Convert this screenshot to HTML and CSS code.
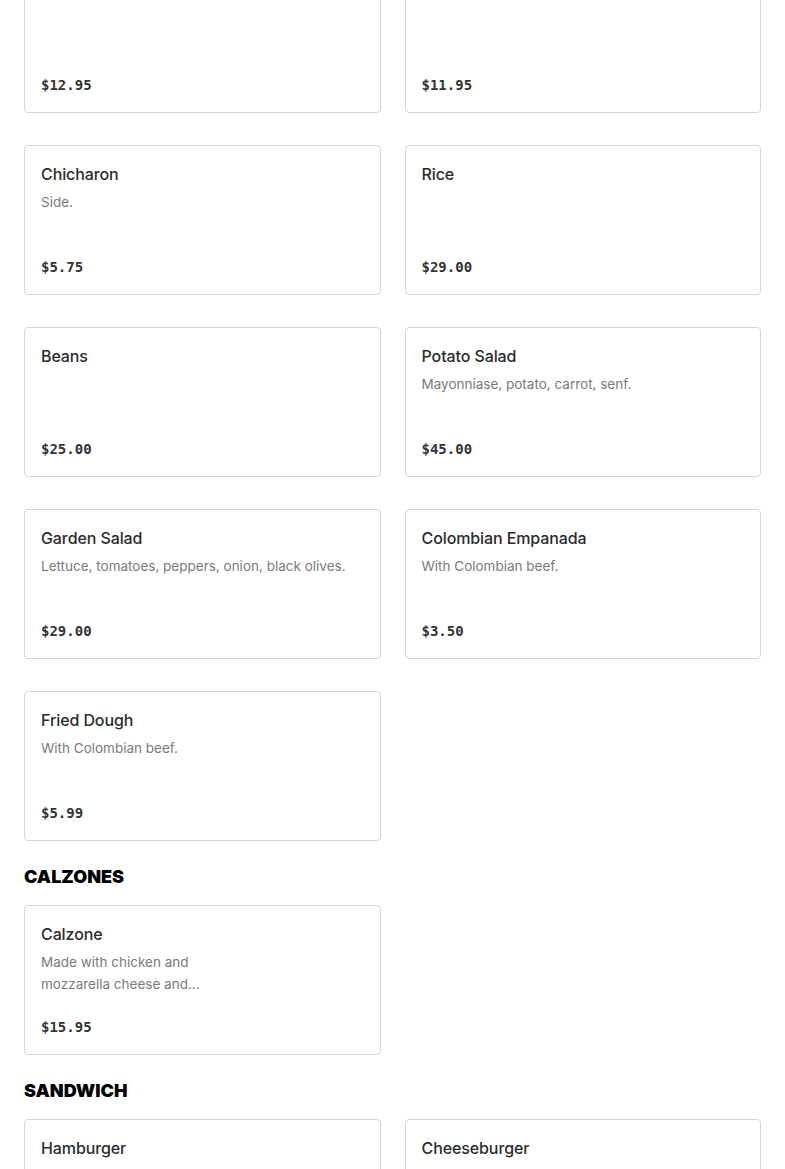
FILE: index.html
```html
<!DOCTYPE html>
<html lang="en">
<head>
<meta charset="utf-8">
<title>Menu</title>
<link rel="stylesheet" href="styles.css">
</head>
<body>
<main class="menu">
  <section class="section section-first">
    <div class="grid">
      <article class="card">
        <h3 class="card-title">Grilled Steak Platter</h3>
        <p class="card-desc"></p>
        <p class="card-price">$12.95</p>
      </article>
      <article class="card">
        <h3 class="card-title">Fried Yuca</h3>
        <p class="card-desc"></p>
        <p class="card-price">$11.95</p>
      </article>
      <article class="card">
        <h3 class="card-title">Chicharon</h3>
        <p class="card-desc">Side.</p>
        <p class="card-price">$5.75</p>
      </article>
      <article class="card">
        <h3 class="card-title">Rice</h3>
        <p class="card-desc"></p>
        <p class="card-price">$29.00</p>
      </article>
      <article class="card">
        <h3 class="card-title">Beans</h3>
        <p class="card-desc"></p>
        <p class="card-price">$25.00</p>
      </article>
      <article class="card">
        <h3 class="card-title">Potato Salad</h3>
        <p class="card-desc">Mayonniase, potato, carrot, senf.</p>
        <p class="card-price">$45.00</p>
      </article>
      <article class="card">
        <h3 class="card-title">Garden Salad</h3>
        <p class="card-desc">Lettuce, tomatoes, peppers, onion, black olives.</p>
        <p class="card-price">$29.00</p>
      </article>
      <article class="card">
        <h3 class="card-title">Colombian Empanada</h3>
        <p class="card-desc">With Colombian beef.</p>
        <p class="card-price">$3.50</p>
      </article>
      <article class="card">
        <h3 class="card-title">Fried Dough</h3>
        <p class="card-desc">With Colombian beef.</p>
        <p class="card-price">$5.99</p>
      </article>
    </div>
  </section>

  <section class="section">
    <h2 class="section-title">CALZONES</h2>
    <div class="grid">
      <article class="card">
        <h3 class="card-title">Calzone</h3>
        <p class="card-desc">Made with chicken and<br>mozzarella cheese and...</p>
        <p class="card-price">$15.95</p>
      </article>
    </div>
  </section>

  <section class="section">
    <h2 class="section-title">SANDWICH</h2>
    <div class="grid">
      <article class="card">
        <h3 class="card-title">Hamburger</h3>
        <p class="card-desc">Beef.</p>
        <p class="card-price">$8.95</p>
      </article>
      <article class="card">
        <h3 class="card-title">Cheeseburger</h3>
        <p class="card-desc">Beef.</p>
        <p class="card-price">$9.95</p>
      </article>
    </div>
  </section>
</main>
</body>
</html>
```

FILE: styles.css
```css
* {
  box-sizing: border-box;
}

html, body {
  margin: 0;
  padding: 0;
  background: #ffffff;
}

body {
  font-family: Inter, "Noto Sans", "Liberation Sans", sans-serif;
  color: #2a2a2a;
}

.menu {
  padding: 0 24px;
}

.section-first {
  margin-top: -37px;
}

.section-title {
  margin: 24px 0 16px;
  font-family: Inter, "Liberation Sans", sans-serif;
  font-size: 18px;
  line-height: 24px;
  font-weight: 900;
  color: #000000;
}

.grid {
  display: grid;
  grid-template-columns: 1fr 1fr;
  column-gap: 24px;
  row-gap: 32px;
}

.card {
  height: 150px;
  border: 1px solid #d6d6d6;
  border-radius: 4px;
  padding: 16px 16px 15px;
  display: flex;
  flex-direction: column;
  background: #ffffff;
}

.card-title {
  margin: 0;
  font-size: 16px;
  line-height: 24px;
  font-weight: 500;
  letter-spacing: -0.1px;
  color: #2b2b2b;
}

.card-desc {
  margin: 5px 0 0;
  font-size: 13.5px;
  line-height: 22px;
  color: #7a7a7a;
}

.card-price {
  margin: auto 0 0;
  font-family: "DejaVu Sans Mono", "Liberation Mono", monospace;
  font-size: 14px;
  line-height: 24px;
  font-weight: 700;
  color: #333333;
}
```
